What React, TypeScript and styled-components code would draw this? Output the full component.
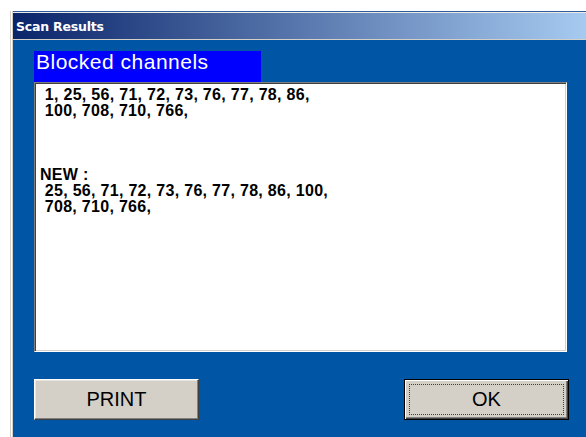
import React from "react";
import styled, { createGlobalStyle } from "styled-components";

const Global = createGlobalStyle`
  html, body {
    margin: 0;
    padding: 0;
    background: #ffffff;
    overflow: hidden;
  }
  #root {
    width: 586px;
    height: 437px;
    overflow: hidden;
  }
`;

const Window = styled.div`
  margin: 11px 0 0 10px;
  height: 426px;
  display: flex;
  flex-direction: column;
  padding: 2px 0 0 3px;
  box-shadow:
    inset 1px 0 #d4d0c8,
    inset 2px 0 #ffffff,
    inset 3px 0 #d4d0c8,
    inset 0 1px #2e5d9e,
    inset 0 2px #eceae4;
`;

const TitleBar = styled.div`
  height: 26px;
  flex: none;
  display: flex;
  align-items: center;
  padding-left: 3px;
  background: linear-gradient(to right, #0a246a 0%, #a6caf0 100%);
  border-bottom: 1px solid #d4d0c8;
  font-family: "DejaVu Sans", Verdana, sans-serif;
  font-weight: bold;
  font-size: 12.5px;
  color: #ffffff;
  letter-spacing: -0.2px;
`;

const Body = styled.div`
  flex: 1;
  background: #0055a5;
  padding: 11px 0 0 21px;
  display: flex;
  flex-direction: column;
  align-items: flex-start;
`;

const SectionLabel = styled.div`
  width: 225px;
  height: 31px;
  padding-left: 2px;
  background: #0000ff;
  color: #ffffff;
  font-family: "Liberation Sans", Arial, sans-serif;
  font-size: 21px;
  line-height: 22px;
  letter-spacing: 0.5px;
`;

const ListBox = styled.div`
  width: 533px;
  height: 270px;
  box-sizing: border-box;
  background: #ffffff;
  border-style: solid;
  border-width: 1px;
  border-color: #808080 #ffffff #ffffff #808080;
  box-shadow: inset 1px 1px #404040, inset -1px -1px #d4d0c8;
  padding: 4px 0 0 5px;
  font-family: "Liberation Sans", Arial, sans-serif;
  font-weight: bold;
  font-size: 16px;
  line-height: 16px;
  letter-spacing: 0.3px;
  color: #000000;
`;

const Line = styled.div`
  white-space: pre;
  height: 16px;
`;

const ButtonRow = styled.div`
  width: 535px;
  margin-top: 27px;
  display: flex;
  justify-content: space-between;
`;

const Button = styled.button<{ $default?: boolean }>`
  width: 165px;
  height: 41px;
  box-sizing: border-box;
  position: relative;
  background: #d4d0c8;
  font-family: "Liberation Sans", Arial, sans-serif;
  font-size: 20px;
  color: #000000;
  padding: 0;
  margin: 0;
  cursor: default;
  border: 1px solid;
  border-color: ${(p) =>
    p.$default ? "#000000" : "#ffffff #404040 #404040 #ffffff"};
  box-shadow: ${(p) =>
    p.$default
      ? "inset 1px 1px #ffffff, inset -1px -1px #404040, inset -2px -2px #808080"
      : "inset -1px -1px #808080, inset 1px 1px #e8e6e0"};
`;

/* dotted focus rectangle drawn over the default button's face */
const FocusRing = styled.span`
  position: absolute;
  inset: 4px;
  border: 1px dotted #404040;
  pointer-events: none;
`;

const ButtonText = styled.span`
  position: relative;
`;

const lines = [
  " 1, 25, 56, 71, 72, 73, 76, 77, 78, 86,",
  " 100, 708, 710, 766,",
  "",
  "",
  "",
  "NEW :",
  " 25, 56, 71, 72, 73, 76, 77, 78, 86, 100,",
  " 708, 710, 766,",
];

export default function App() {
  return (
    <>
      <Global />
      <Window>
        <TitleBar>Scan Results</TitleBar>
        <Body>
          <SectionLabel>Blocked channels</SectionLabel>
          <ListBox>
            {lines.map((t, i) => (
              <Line key={i}>{t}</Line>
            ))}
          </ListBox>
          <ButtonRow>
            <Button>
              <ButtonText>PRINT</ButtonText>
            </Button>
            <Button $default>
              <FocusRing />
              <ButtonText>OK</ButtonText>
            </Button>
          </ButtonRow>
        </Body>
      </Window>
    </>
  );
}
